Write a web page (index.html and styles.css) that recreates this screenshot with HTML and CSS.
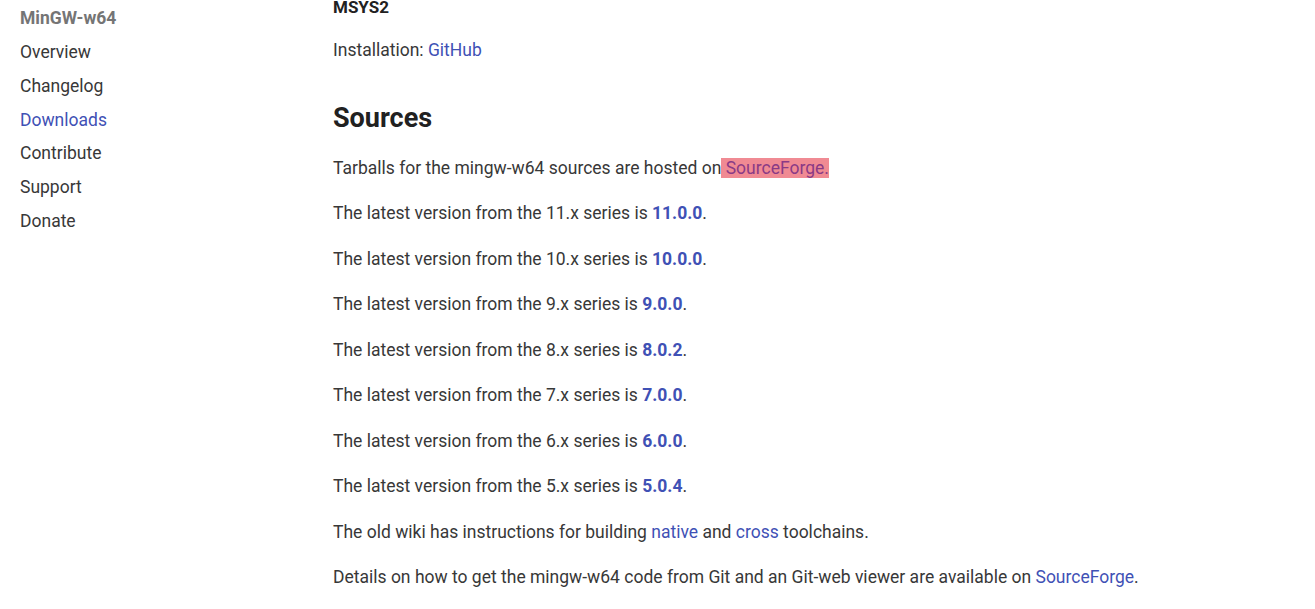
FILE: index.html
```html
<!DOCTYPE html>
<html>
<head>
<meta charset="utf-8">
<link rel="stylesheet" href="styles.css">
</head>
<body>
<div class="page">
  <nav class="sidebar">
    <div class="brand">MinGW-w64</div>
    <a class="nav-item" href="#">Overview</a>
    <a class="nav-item" href="#">Changelog</a>
    <a class="nav-item active" href="#">Downloads</a>
    <a class="nav-item" href="#">Contribute</a>
    <a class="nav-item" href="#">Support</a>
    <a class="nav-item" href="#">Donate</a>
  </nav>
  <main class="content">
    <h4 class="subhead">MSYS2</h4>
    <p>Installation: <a href="#">GitHub</a></p>
    <h2>Sources</h2>
    <p>Tarballs for the mingw-w64 sources are hosted on<span class="mark"> SourceForge.</span></p>
    <p>The latest version from the 11.x series is <a class="ver" href="#">11.0.0</a>.</p>
    <p>The latest version from the 10.x series is <a class="ver" href="#">10.0.0</a>.</p>
    <p>The latest version from the 9.x series is <a class="ver" href="#">9.0.0</a>.</p>
    <p>The latest version from the 8.x series is <a class="ver" href="#">8.0.2</a>.</p>
    <p>The latest version from the 7.x series is <a class="ver" href="#">7.0.0</a>.</p>
    <p>The latest version from the 6.x series is <a class="ver" href="#">6.0.0</a>.</p>
    <p>The latest version from the 5.x series is <a class="ver" href="#">5.0.4</a>.</p>
    <p>The old wiki has instructions for building <a href="#">native</a> and <a href="#">cross</a> toolchains.</p>
    <p>Details on how to get the mingw-w64 code from Git and an Git-web viewer are available on <a href="#">SourceForge</a>.</p>
  </main>
</div>
</body>
</html>
```
FILE: styles.css
```css
html, body {
  margin: 0;
  padding: 0;
  background: #fff;
}
body {
  font-family: Roboto, "Noto Sans", sans-serif;
  color: #383838;
  font-size: 17.5px;
  overflow: hidden;
}
a {
  color: #3f51b5;
  text-decoration: none;
}
.page {
  display: flex;
  height: 609px;
  overflow: hidden;
}
.sidebar {
  width: 333px;
  flex: none;
  padding-left: 20px;
  box-sizing: border-box;
  display: flex;
  flex-direction: column;
}
.brand {
  font-weight: 700;
  color: #757575;
  font-size: 17.5px;
  line-height: 34px;
  margin-top: 1px;
}
.nav-item {
  color: #383838;
  line-height: 34px;
  height: 33.8px;
}
.nav-item.active {
  color: #3f51b5;
}
.content {
  flex: 1;
  margin-top: -4px;
}
.subhead {
  font-size: 17px;
  font-weight: 700;
  line-height: 24px;
  margin: -1px 0 17.5px;
  color: #212121;
}
.content p {
  margin: 0 0 18.5px;
  line-height: 27px;
}
.content h2 {
  font-size: 27px;
  font-weight: 700;
  line-height: 32px;
  margin: 38.5px 0 20.5px;
  color: #212121;
}
.ver {
  font-weight: 700;
}
.mark {
  background: #f08a93;
  color: #8a3a86;
}
```
